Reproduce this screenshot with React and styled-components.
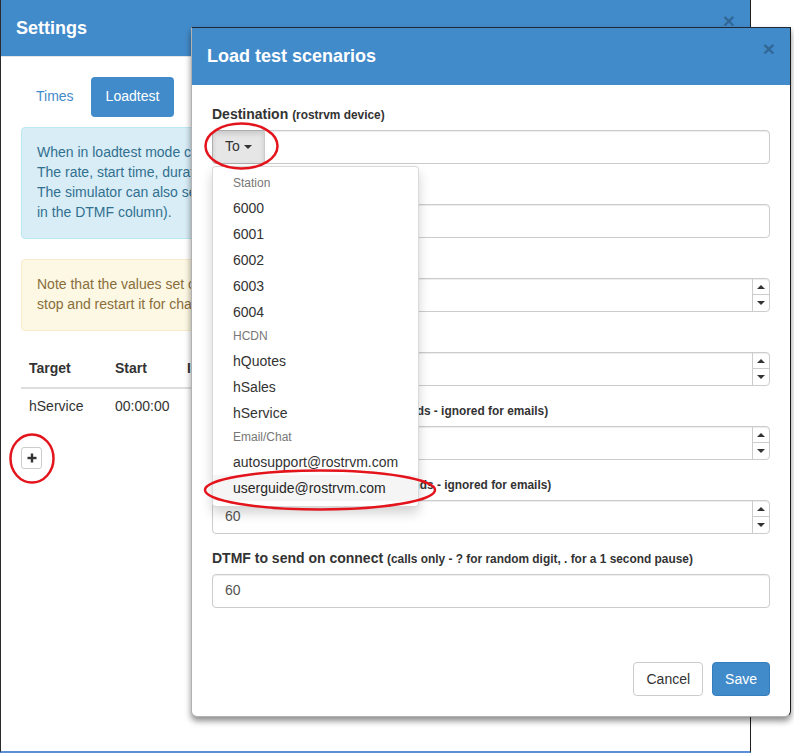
import React from "react";
import styled, { createGlobalStyle } from "styled-components";

//Colours
const colors = {
  primary: "#428bca",
  primaryBorder: "#357ebd",
  text: "#333",
  muted: "#777",
  border: "#ccc",
  annotation: "#e3141c",
};

//Global
const GlobalStyle = createGlobalStyle`
  * { box-sizing: border-box; }
  html, body { margin: 0; padding: 0; background: #fff; }
  body {
    font-family: "Liberation Sans", Arial, Helvetica, sans-serif;
    font-size: 14px;
    line-height: 1.42857;
    color: ${colors.text};
  }
`;

const Page = styled.div`
  position: relative;
  width: 794px;
  height: 756px;
  overflow: hidden;
  background: #fff;
`;

//Settings window (background)
const SettingsWindow = styled.div`
  width: 751px;
  height: 753px;
  border-left: 1px solid #2b2b2b;
  border-right: 1px solid #1e1e1e;
  border-bottom: 2px solid #5b8fd8;
  background: #fff;
`;

const Header = styled.div`
  display: flex;
  align-items: flex-start;
  justify-content: space-between;
  padding: 15px;
  background-color: ${colors.primary};
  border-bottom: 1px solid ${(p) => (p.$divider ? "#e5e5e5" : colors.primary)};
`;

const Title = styled.h4`
  margin: 0;
  font-size: 18px;
  font-weight: bold;
  line-height: 26px;
  color: #fff;
`;

const Close = styled.span`
  margin-top: -5px;
  font-size: 21px;
  font-weight: bold;
  line-height: 1;
  color: #000;
  opacity: 0.25;
`;

const SettingsBody = styled.div`
  padding: 20px;
`;

const Pills = styled.div`
  display: flex;
  gap: 2px;
  margin-bottom: 10px;
`;

const Pill = styled.div`
  padding: 10px 15px;
  border-radius: 4px;
  color: ${(p) => (p.$active ? "#fff" : colors.primary)};
  background-color: ${(p) => (p.$active ? colors.primary : "transparent")};
`;

const Alert = styled.div`
  width: 100%;
  padding: 15px;
  margin-bottom: 20px;
  border: 1px solid ${(p) => (p.$kind === "info" ? "#bce8f1" : "#faebcc")};
  border-radius: 4px;
  background-color: ${(p) => (p.$kind === "info" ? "#d9edf7" : "#fcf8e3")};
  color: ${(p) => (p.$kind === "info" ? "#31708f" : "#8a6d3b")};
  white-space: nowrap;
`;

const Table = styled.table`
  width: 100%;
  table-layout: fixed;
  border-collapse: collapse;
  margin-bottom: 22px;
`;

const Th = styled.th`
  width: ${(p) => (p.$w ? `${p.$w}px` : "auto")};
  padding: 8px;
  text-align: left;
  font-weight: bold;
  border-bottom: 2px solid #ddd;
  white-space: nowrap;
`;

const Td = styled.td`
  padding: 8px;
  white-space: nowrap;
`;

const SmallButton = styled.button`
  display: flex;
  align-items: center;
  justify-content: center;
  width: 21px;
  height: 22px;
  padding: 0;
  border: 1px solid ${colors.border};
  border-radius: 3px;
  background: #fff;
`;

//Modal
const Modal = styled.div`
  position: absolute;
  left: 191px;
  top: 27px;
  width: 600px;
  display: flex;
  flex-direction: column;
  background: #fff;
  border: 1px solid rgba(0, 0, 0, 0.3);
  border-top-color: #1f2a36;
  border-right-color: #1c1c1c;
  border-radius: 0 0 6px 6px;
  box-shadow: 0 4px 6px rgba(0, 0, 0, 0.45);
`;

const ModalBody = styled.div`
  padding: 20px;
`;

const FormGroup = styled.div`
  margin-bottom: 15px;
`;

const Label = styled.label`
  display: block;
  margin-bottom: 5px;
  font-weight: bold;
  white-space: nowrap;

  small {
    font-size: 85%;
  }
`;

const Input = styled.div`
  height: 34px;
  padding: 6px 12px;
  border: 1px solid ${colors.border};
  border-radius: ${(p) => (p.$joined ? "0 4px 4px 0" : "4px")};
  box-shadow: inset 0 1px 1px rgba(0, 0, 0, 0.075);
  color: #555;
  flex: 1;
`;

const NumberBox = styled.div`
  display: flex;
  height: 34px;
  border: 1px solid ${colors.border};
  border-radius: 4px;
  box-shadow: inset 0 1px 1px rgba(0, 0, 0, 0.075);
  color: #555;
`;

const NumberValue = styled.div`
  flex: 1;
  padding: 6px 12px;
`;

const Spinner = styled.div`
  display: flex;
  flex-direction: column;
  width: 17px;
  border-left: 1px solid ${colors.border};
`;

const SpinHalf = styled.div`
  flex: 1;
  display: flex;
  align-items: center;
  justify-content: center;
  border-bottom: ${(p) => (p.$up ? `1px solid ${colors.border}` : "0")};

  &::after {
    content: "";
    width: 0;
    height: 0;
    border-left: 4px solid transparent;
    border-right: 4px solid transparent;
    ${(p) =>
      p.$up
        ? "border-bottom: 4px solid #333;"
        : "border-top: 4px solid #333;"}
  }
`;

const InputGroup = styled.div`
  position: relative;
  display: flex;
`;

const ToButton = styled.div`
  display: flex;
  align-items: center;
  gap: 4px;
  height: 34px;
  padding: 6px 12px;
  margin-right: -1px;
  border: 1px solid #adadad;
  border-radius: 4px 0 0 4px;
  background-color: #e6e6e6;
  box-shadow: inset 0 3px 5px rgba(0, 0, 0, 0.125);
  color: ${colors.text};
`;

const Caret = styled.span`
  width: 0;
  height: 0;
  border-top: 4px solid #333;
  border-left: 4px solid transparent;
  border-right: 4px solid transparent;
`;

const Dropdown = styled.ul`
  position: absolute;
  top: 100%;
  left: 0;
  z-index: 10;
  margin: 2px 0 0;
  padding: 5px 0;
  list-style: none;
  background: #fff;
  border: 1px solid rgba(0, 0, 0, 0.15);
  border-radius: 4px;
  box-shadow: 0 6px 12px rgba(0, 0, 0, 0.175);
`;

const DropHeader = styled.li`
  padding: 3px 20px;
  font-size: 12px;
  line-height: 1.42857;
  color: ${colors.muted};
`;

const DropItem = styled.li`
  padding: 3px 20px;
  line-height: 20px;
  white-space: nowrap;
  color: ${(p) => (p.$hover ? "#262626" : colors.text)};
  background-color: ${(p) => (p.$hover ? "#f5f5f5" : "transparent")};
`;

const ModalFooter = styled.div`
  display: flex;
  justify-content: flex-end;
  gap: 9px;
  padding: 19px 20px 20px;
`;

const Button = styled.button`
  height: 34px;
  padding: 6px 12px;
  font-family: inherit;
  font-size: 14px;
  border-radius: 4px;
  border: 1px solid ${(p) => (p.$primary ? colors.primaryBorder : colors.border)};
  background-color: ${(p) => (p.$primary ? colors.primary : "#fff")};
  color: ${(p) => (p.$primary ? "#fff" : colors.text)};
`;

//Red hand-drawn marks
const Marks = styled.svg`
  position: absolute;
  left: 0;
  top: 0;
  z-index: 20;
  pointer-events: none;
`;

const destinations = [
  { header: "Station" },
  { label: "6000" },
  { label: "6001" },
  { label: "6002" },
  { label: "6003" },
  { label: "6004" },
  { header: "HCDN" },
  { label: "hQuotes" },
  { label: "hSales" },
  { label: "hService" },
  { header: "Email/Chat" },
  { label: "autosupport@rostrvm.com" },
  { label: "userguide@rostrvm.com", hover: true },
];

const numberFields = [
  { label: "Rate", note: "(calls per hour)" },
  { label: "Start delay", note: "(minutes)" },
  { label: "Minimum call duration", note: "(in seconds - ignored for emails)" },
  { label: "Maximum call duration", note: "(in seconds - ignored for emails)", value: "60" },
];

const NumberField = ({ value }) => (
  <NumberBox>
    <NumberValue>{value}</NumberValue>
    <Spinner>
      <SpinHalf $up />
      <SpinHalf />
    </Spinner>
  </NumberBox>
);

const App = () => {
  return (
    <Page>
      <GlobalStyle />
      <SettingsWindow>
        <Header $divider>
          <Title>Settings</Title>
          <Close>×</Close>
        </Header>
        <SettingsBody>
          <Pills>
            <Pill>Times</Pill>
            <Pill $active>Loadtest</Pill>
          </Pills>
          <Alert $kind="info">
            When in loadtest mode calls and emails are generated according to the scenarios below.
            <br />
            The rate, start time, duration and wrap up time can be set for each scenario.
            <br />
            The simulator can also send DTMF digits once a call is connected (enter these
            <br />
            in the DTMF column).
          </Alert>
          <Alert $kind="warning">
            Note that the values set on this page take effect when the loadtest is started -
            <br />
            stop and restart it for changes to take effect.
          </Alert>
          <Table>
            <thead>
              <tr>
                <Th $w={86}>Target</Th>
                <Th $w={72}>Start</Th>
                <Th>Interval</Th>
                <Th>Duration</Th>
                <Th>DTMF</Th>
              </tr>
            </thead>
            <tbody>
              <tr>
                <Td>hService</Td>
                <Td>00:00:00</Td>
                <Td></Td>
                <Td>60</Td>
                <Td></Td>
              </tr>
            </tbody>
          </Table>
          <SmallButton>
            <svg width="10" height="10" viewBox="0 0 10 10">
              <rect x="3.8" y="0.5" width="2.4" height="9" fill="#333" />
              <rect x="0.5" y="3.8" width="9" height="2.4" fill="#333" />
            </svg>
          </SmallButton>
        </SettingsBody>
      </SettingsWindow>

      <Modal>
        <Header>
          <Title>Load test scenarios</Title>
          <Close>×</Close>
        </Header>
        <ModalBody>
          <FormGroup>
            <Label>
              Destination <small>(rostrvm device)</small>
            </Label>
            <InputGroup>
              <ToButton>
                To <Caret />
              </ToButton>
              <Input $joined />
              <Dropdown>
                {destinations.map((d) =>
                  d.header ? (
                    <DropHeader key={d.header}>{d.header}</DropHeader>
                  ) : (
                    <DropItem key={d.label} $hover={d.hover}>
                      {d.label}
                    </DropItem>
                  )
                )}
              </Dropdown>
            </InputGroup>
          </FormGroup>
          <FormGroup>
            <Label>
              Caller ID <small>(calling number)</small>
            </Label>
            <Input />
          </FormGroup>
          {numberFields.map((f) => (
            <FormGroup key={f.label}>
              <Label>
                {f.label} <small>{f.note}</small>
              </Label>
              <NumberField value={f.value} />
            </FormGroup>
          ))}
          <FormGroup>
            <Label>
              DTMF to send on connect{" "}
              <small>(calls only - ? for random digit, . for a 1 second pause)</small>
            </Label>
            <Input>60</Input>
          </FormGroup>
        </ModalBody>
        <ModalFooter>
          <Button>Cancel</Button>
          <Button $primary>Save</Button>
        </ModalFooter>
      </Modal>

      <Marks width="794" height="756">
        <ellipse cx="241.5" cy="146" rx="36" ry="22.5" fill="none" stroke={colors.annotation} strokeWidth="2.5" />
        <ellipse cx="320" cy="490" rx="115" ry="19.5" fill="none" stroke={colors.annotation} strokeWidth="2.5" />
        <ellipse cx="32" cy="458.5" rx="21.5" ry="24" fill="none" stroke={colors.annotation} strokeWidth="2.5" />
      </Marks>
    </Page>
  );
};

export default App;
